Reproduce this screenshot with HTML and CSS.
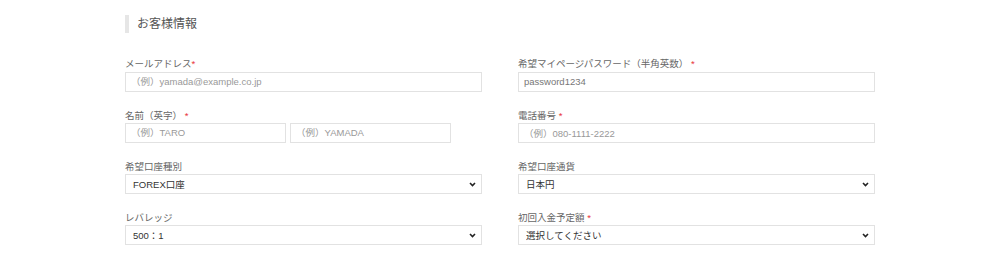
FILE: index.html
```html
<!DOCTYPE html>
<html lang="ja">
<head>
  <meta charset="UTF-8">
  <link rel="stylesheet" href="styles.css">
  <title>お客様情報</title>
</head>
<body>
  <div class="form-wrap">
    <h2 class="section-title">お客様情報</h2>

    <div class="form-grid">
      <div class="field">
        <label>メールアドレス<span class="req">*</span></label>
        <input type="text" placeholder="（例）yamada@example.co.jp">
      </div>
      <div class="field">
        <label>希望マイページパスワード（半角英数） <span class="req">*</span></label>
        <input type="text" class="filled" value="password1234">
      </div>

      <div class="field">
        <label>名前（英字） <span class="req">*</span></label>
        <div class="name-pair">
          <input type="text" placeholder="（例）TARO">
          <input type="text" placeholder="（例）YAMADA">
        </div>
      </div>
      <div class="field">
        <label>電話番号 <span class="req">*</span></label>
        <input type="text" placeholder="（例）080-1111-2222">
      </div>

      <div class="field">
        <label>希望口座種別</label>
        <div class="select-box">
          <select>
            <option>FOREX口座</option>
          </select>
          <svg class="chevron" width="7" height="5" viewBox="0 0 7 5"><polyline points="1,1 3.5,3.5 6,1" fill="none" stroke="#222" stroke-width="1.6"/></svg>
        </div>
      </div>
      <div class="field">
        <label>希望口座通貨</label>
        <div class="select-box">
          <select>
            <option>日本円</option>
          </select>
          <svg class="chevron" width="7" height="5" viewBox="0 0 7 5"><polyline points="1,1 3.5,3.5 6,1" fill="none" stroke="#222" stroke-width="1.6"/></svg>
        </div>
      </div>

      <div class="field">
        <label>レバレッジ</label>
        <div class="select-box">
          <select>
            <option>500：1</option>
          </select>
          <svg class="chevron" width="7" height="5" viewBox="0 0 7 5"><polyline points="1,1 3.5,3.5 6,1" fill="none" stroke="#222" stroke-width="1.6"/></svg>
        </div>
      </div>
      <div class="field">
        <label>初回入金予定額 <span class="req">*</span></label>
        <div class="select-box">
          <select>
            <option>選択してください</option>
          </select>
          <svg class="chevron" width="7" height="5" viewBox="0 0 7 5"><polyline points="1,1 3.5,3.5 6,1" fill="none" stroke="#222" stroke-width="1.6"/></svg>
        </div>
      </div>
    </div>
  </div>
</body>
</html>
```

FILE: styles.css
```css
body {
  margin: 0;
  background: #fff;
  font-family: "Liberation Sans", "Noto Sans CJK JP", sans-serif;
  color: #555;
}

.form-wrap {
  width: 750px;
  margin: 0 auto;
  padding-top: 15px;
}

.section-title {
  margin: 0;
  height: 18px;
  line-height: 18px;
  border-left: 4px solid #e6e6e6;
  padding-left: 8px;
  font-size: 12px;
  font-weight: normal;
  color: #555;
}

.form-grid {
  display: grid;
  grid-template-columns: 357px 357px;
  column-gap: 36px;
  row-gap: 18px;
  margin-top: 25px;
}

.field label {
  display: block;
  font-size: 9.5px;
  line-height: 12px;
  color: #666;
  margin-bottom: 1px;
}

.req {
  color: #e8333a;
}

.field input,
.field select {
  box-sizing: border-box;
  width: 100%;
  height: 20px;
  margin: 0;
  border: 1px solid #e2e2e2;
  background: #fff;
  font-family: "Liberation Sans", "Noto Sans CJK JP", sans-serif;
  font-size: 9.5px;
  color: #333;
  outline: none;
}

.field input {
  padding: 0 5px;
}

.field input::placeholder {
  color: #999;
}

.field input.filled {
  color: #777;
}

.select-box {
  position: relative;
}

.field select {
  display: block;
  appearance: none;
  -webkit-appearance: none;
  padding: 0 20px 0 7px;
  border-radius: 0;
}

.chevron {
  position: absolute;
  right: 6px;
  top: 8px;
  pointer-events: none;
}

.name-pair {
  display: grid;
  grid-template-columns: 161px 161px;
  column-gap: 4px;
}
```
